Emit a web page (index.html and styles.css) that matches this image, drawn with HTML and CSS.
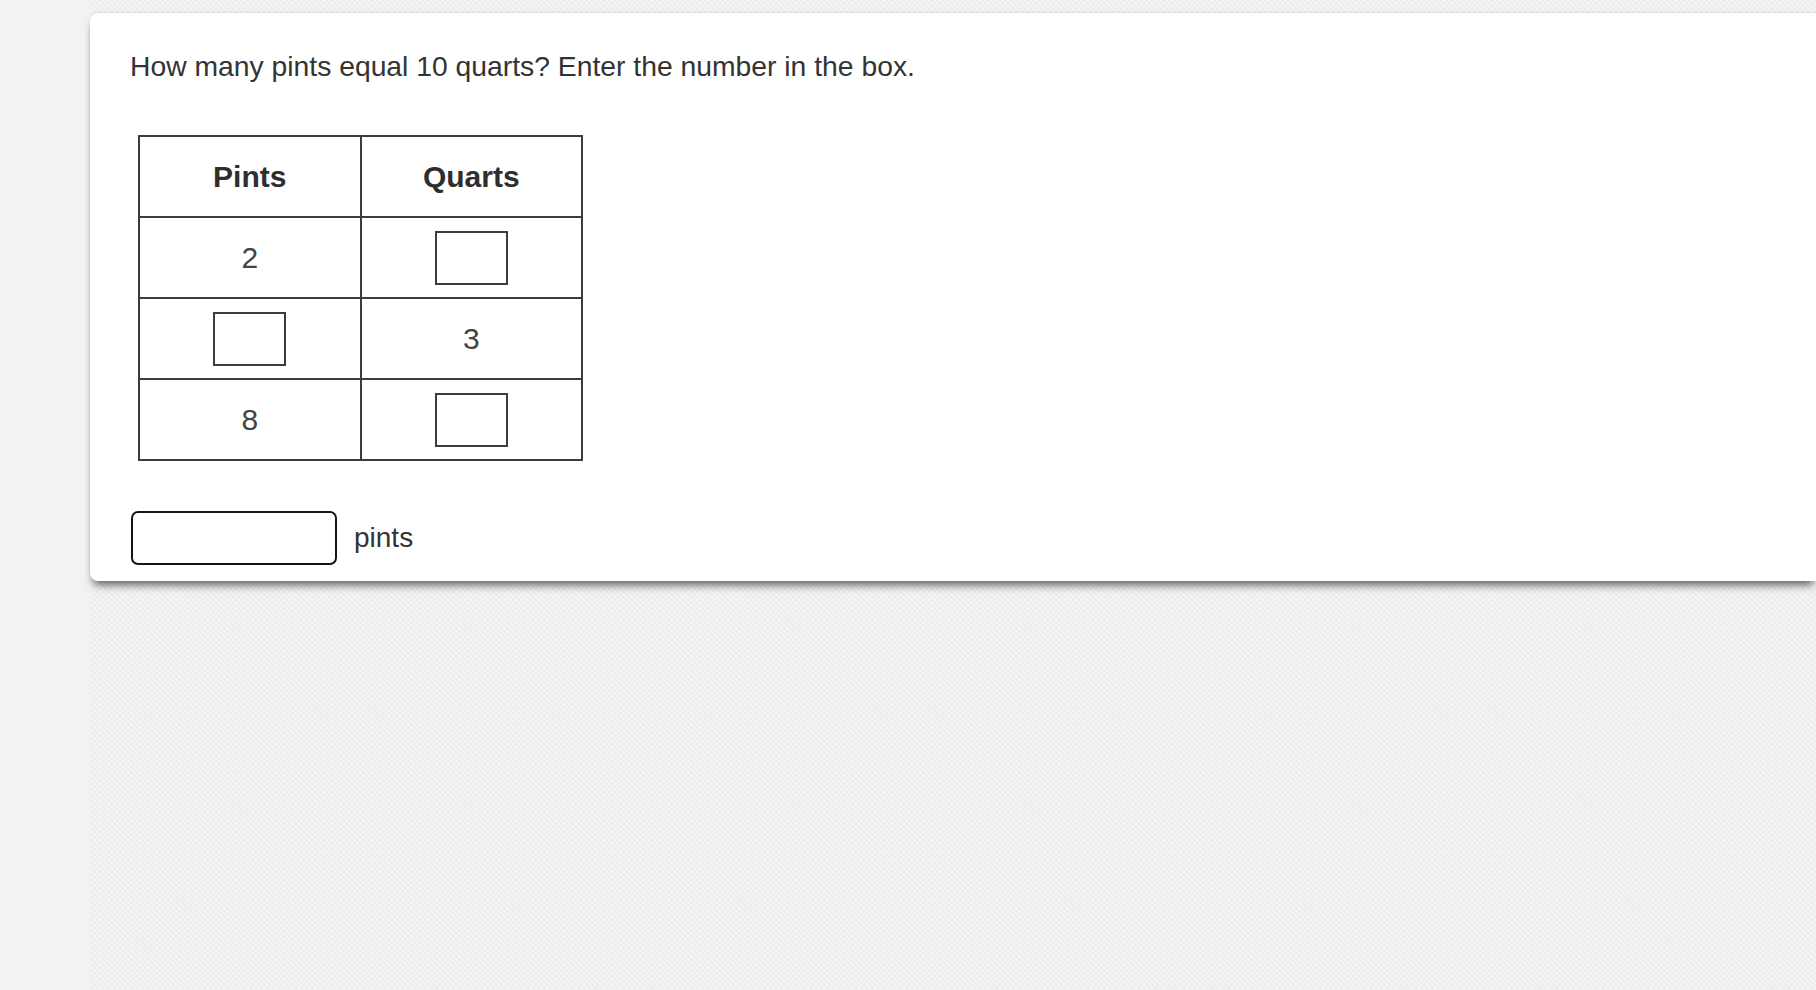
FILE: index.html
```html
<!DOCTYPE html>
<html lang="en">
<head>
  <meta charset="UTF-8" />
  <title>Pints and Quarts</title>
  <link rel="stylesheet" href="styles.css">
</head>
<body>
  <div class="page">
    <div class="side"></div>
    <div class="main">
      <div class="card">
        <p class="question">How many pints equal 10 quarts? Enter the number in the box.</p>

        <table class="conv">
          <tr>
            <th>Pints</th>
            <th>Quarts</th>
          </tr>
          <tr>
            <td>2</td>
            <td><span class="blank"></span></td>
          </tr>
          <tr>
            <td><span class="blank"></span></td>
            <td>3</td>
          </tr>
          <tr>
            <td>8</td>
            <td><span class="blank"></span></td>
          </tr>
        </table>

        <div class="answer">
          <input type="text" class="answer-box" />
          <span class="unit">pints</span>
        </div>
      </div>
    </div>
  </div>
</body>
</html>
```

FILE: styles.css
```css
html, body {
  margin: 0;
  height: 100%;
}
body {
  font-family: "Liberation Sans", Arial, sans-serif;
  color: #333;
  background: #f2f2f2;
}
.page {
  display: flex;
  min-height: 100%;
}
.side {
  width: 90px;
  flex: none;
  background: #f2f2f2;
}
.main {
  flex: 1;
  padding-top: 13px;
  background-color: #efefef;
  background-image:
    repeating-linear-gradient(45deg, rgba(255,255,255,0.35) 0 2px, transparent 2px 4px),
    repeating-linear-gradient(-45deg, rgba(0,0,0,0.015) 0 2px, transparent 2px 4px);
}
.card {
  background: #fff;
  height: 568px;
  box-sizing: border-box;
  padding: 36px 40px 16px;
  border-radius: 8px 0 0 8px;
  box-shadow: 0 7px 8px -3px rgba(0,0,0,0.6), 0 -1px 2px rgba(0,0,0,0.08);
}
.question {
  margin: 0;
  font-size: 28.3px;
  line-height: 34px;
}
.conv {
  margin: 52px 0 0 8px;
  border-collapse: collapse;
  table-layout: fixed;
  width: 445px;
  color: #3a3a3a;
}
.conv th, .conv td {
  border: 2px solid #3c3c3c;
  height: 79px;
  padding: 0;
  text-align: center;
  vertical-align: middle;
  font-size: 30px;
}
.conv th {
  font-weight: bold;
  color: #2e2e2e;
}
.conv td {
  color: #444;
}
.blank {
  display: inline-block;
  vertical-align: middle;
  width: 69px;
  height: 50px;
  border: 2px solid #3c3c3c;
}
.answer {
  display: flex;
  align-items: center;
  gap: 17px;
  margin-top: 50px;
}
.answer-box {
  width: 206px;
  height: 54px;
  box-sizing: border-box;
  border: 2px solid #151515;
  border-radius: 7px;
  font-size: 24px;
  padding: 0 10px;
  margin: 0 0 0 1px;
}
.unit {
  font-size: 28px;
  color: #333;
}
```
